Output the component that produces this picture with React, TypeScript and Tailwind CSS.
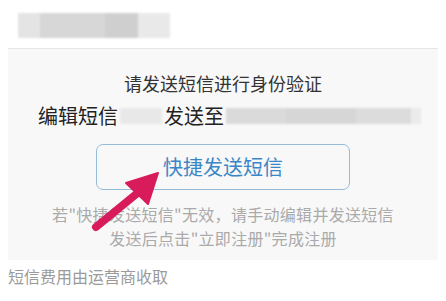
import React from 'react';

const font = { fontFamily: '"Noto Sans CJK SC", "Noto Sans", sans-serif' };

const Arrow: React.FC = () => (
  <svg className="absolute left-0 top-0 pointer-events-none" width="446" height="301" viewBox="0 0 446 301">
    <line x1="96" y1="227" x2="140" y2="191" stroke="#d81b5a" strokeWidth="8" strokeLinecap="round" />
    <polygon points="158,173 126,183 148,204" fill="#d81b5a" stroke="#d81b5a" strokeWidth="2" strokeLinejoin="round" />
  </svg>
);

export default function App() {
  return (
    <div className="relative w-[446px] h-[301px] bg-white overflow-hidden" style={font}>
      <div className="pt-[13px] pl-[18px]">
        <div className="flex h-[25px] w-[152px] blur-[1px]">
          <div className="w-[22px] bg-[#e4e4e4]" />
          <div className="w-[65px] bg-[#d7d7d7]" />
          <div className="w-[33px] bg-[#cfcfcf]" />
          <div className="w-[32px] bg-[#e9e9e9]" />
        </div>
      </div>

      <div className="mt-[10px] mx-[8px] h-[212px] bg-[#f8f8f8] border-t border-[#e6e6e6] flex flex-col">
        <div className="pt-[22px] text-center text-[18px] leading-[24px] text-[#333]">请发送短信进行身份验证</div>
        <div className="mt-[8px] pl-[30px] flex items-center h-[26px] text-[20px] leading-[26px] text-[#222]">
          <span>编辑短信</span>
          <span className="mx-[2px] w-[42px] h-[16px] bg-[#e8e8e8] blur-[1px]" />
          <span>发送至</span>
          <span className="ml-[2px] flex h-[16px] blur-[1px]">
            <span className="w-[60px] bg-[#dadada]" />
            <span className="w-[70px] bg-[#d6d6d6]" />
            <span className="w-[55px] bg-[#dcdcdc]" />
            <span className="w-[10px] bg-[#ebebeb]" />
          </span>
        </div>
        <div className="mt-[15px] self-center w-[254px] h-[46px] rounded-[7px] border border-[#97bcda] flex items-center justify-center text-[20px] text-[#3a86c6]">
          快捷发送短信
        </div>
        <div className="mt-[12px] text-center text-[16px] leading-[24px] tracking-[0.3px] text-[#aaaaaa]">
          <div>若"快捷发送短信"无效，请手动编辑并发送短信</div>
          <div>发送后点击"立即注册"完成注册</div>
        </div>
      </div>

      <div className="mt-[5px] pl-[8px] text-[16px] leading-[22px] text-[#9a9a9a]">短信费用由运营商收取</div>

      <Arrow />
    </div>
  );
}
